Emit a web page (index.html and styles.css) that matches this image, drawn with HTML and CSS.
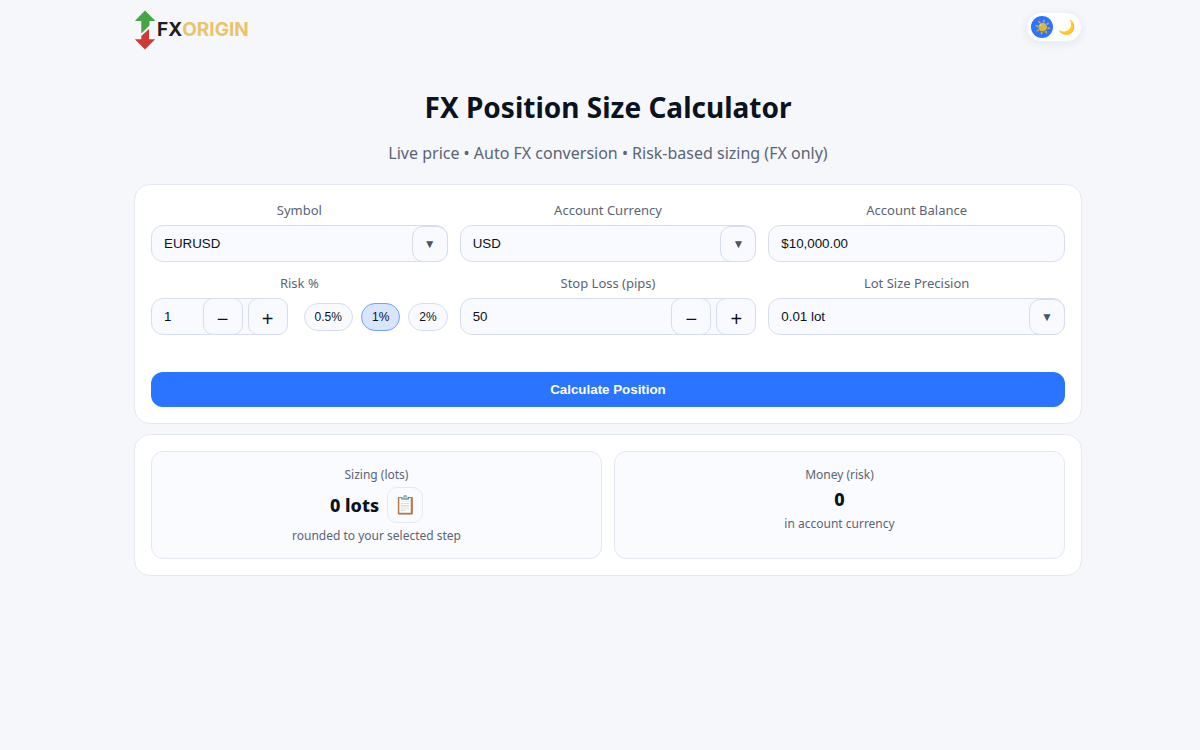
FILE: index.html
```html
<!DOCTYPE html>
<html lang="en">
<head>
<meta charset="utf-8">
<meta name="viewport" content="width=device-width, initial-scale=1">
<title>FX Position Size Calculator</title>
<link rel="stylesheet" href="styles.css">
</head>
<body>
<div class="page">
  <header class="topbar">
    <a class="brand" href="#" aria-label="FXORIGIN">
      <svg class="brand-mark" viewBox="0 0 22 40" aria-hidden="true">
        <path fill="#48a547" d="M11 0.500 21.500 11H15.500V15.500L7.300 23.500V11H0.800Z"/>
        <path fill="#cf3a34" d="M15 19V29.300H21.200L11 39.500 0.800 29.300H7.300V26Z"/>
      </svg>
      <span class="brand-fx">FX</span><span class="brand-origin">ORIGIN</span>
    </a>
    <div class="theme" role="group" aria-label="Theme">
      <button class="theme-btn theme-on" type="button" aria-label="Light"><span class="sun">☀️</span></button>
      <button class="theme-btn" type="button" aria-label="Dark">🌙</button>
    </div>
  </header>

  <main>
    <h1 class="title">FX Position Size Calculator</h1>
    <p class="subtitle">Live price • Auto FX conversion • Risk-based sizing (FX only)</p>

    <form class="card">
      <div class="fields">
        <div class="field">
          <label for="symbol">Symbol</label>
          <div class="control">
            <select class="box" id="symbol"><option>EURUSD</option></select>
            <span class="arrow" aria-hidden="true">▼</span>
          </div>
        </div>
        <div class="field">
          <label for="currency">Account Currency</label>
          <div class="control">
            <select class="box" id="currency"><option>USD</option></select>
            <span class="arrow" aria-hidden="true">▼</span>
          </div>
        </div>
        <div class="field">
          <label for="balance">Account Balance</label>
          <input class="box" id="balance" type="text" value="$10,000.00">
        </div>
        <div class="field">
          <label for="risk">Risk %</label>
          <div class="risk-row">
            <div class="control">
              <input class="box" id="risk" type="text" value="1">
              <div class="steps">
                <button class="step" type="button" aria-label="Decrease risk">−</button>
                <button class="step" type="button" aria-label="Increase risk">+</button>
              </div>
            </div>
            <div class="pills">
              <button class="pill" type="button">0.5%</button>
              <button class="pill pill-on" type="button">1%</button>
              <button class="pill" type="button">2%</button>
            </div>
          </div>
        </div>
        <div class="field">
          <label for="stop">Stop Loss (pips)</label>
          <div class="control">
            <input class="box" id="stop" type="text" value="50">
            <div class="steps">
              <button class="step" type="button" aria-label="Decrease stop loss">−</button>
              <button class="step" type="button" aria-label="Increase stop loss">+</button>
            </div>
          </div>
        </div>
        <div class="field">
          <label for="precision">Lot Size Precision</label>
          <div class="control">
            <select class="box" id="precision"><option>0.01 lot</option></select>
            <span class="arrow" aria-hidden="true">▼</span>
          </div>
        </div>
      </div>
      <button class="submit" type="button">Calculate Position</button>
    </form>

    <section class="card results">
      <div class="result">
        <div class="note">Sizing (lots)</div>
        <div class="value"><span>0 lots</span><button class="copy" type="button" aria-label="Copy">📋</button></div>
        <div class="note">rounded to your selected step</div>
      </div>
      <div class="result">
        <div class="note">Money (risk)</div>
        <div class="value">0</div>
        <div class="note">in account currency</div>
      </div>
    </section>
  </main>
</div>
</body>
</html>
```
FILE: styles.css
```css
* { box-sizing: border-box; }

body {
  margin: 0;
  padding: 10px 0 0 16px;
  background: #f5f7fb;
  color: #0b1220;
  font-family: "Noto Sans", sans-serif;
  text-align: center;
}

button, input, select { font-family: "Liberation Sans", Arial, sans-serif; color: #0b1220; }
button { cursor: pointer; padding: 0; }

.page { max-width: 948px; margin: 0 auto; }

.topbar { display: flex; justify-content: space-between; align-items: flex-start; }
.brand {
  display: flex;
  align-items: center;
  height: 40px;
  font: 700 19px/24px Inter, sans-serif;
  text-decoration: none;
}
.brand-mark { width: 22px; height: 40px; margin-right: 1px; }
.brand-fx { color: #1f1f1f; }
.brand-origin { color: #e8c46c; }

.theme {
  display: flex;
  gap: 2px;
  margin-top: 2px;
  padding: 3px 4px;
  border: 1px solid #eef1f8;
  border-radius: 999px;
  background: #fff;
  box-shadow: 0 2px 8px rgba(20, 40, 90, 0.08);
}
.theme-btn {
  width: 22px;
  height: 22px;
  border: 0;
  border-radius: 50%;
  background: none;
  font-size: 14px;
  line-height: 22px;
}
.theme-on { background: #2a74ff; }
.sun { opacity: 0.85; }

.title { margin: 38px 0 0; font-size: 28px; line-height: 38px; }
.subtitle { margin: 16px 0 20px; color: #5b6475; font-size: 16px; line-height: 22px; }

.card {
  margin-bottom: 10px;
  padding: 16px;
  border: 1px solid #e4e8f2;
  border-radius: 16px;
  background: #fff;
}
.fields { display: grid; grid-template-columns: repeat(3, minmax(0, 1fr)); gap: 12px; }
.field { display: flex; flex-direction: column; gap: 6px; }
.field label { color: #5b6475; font-size: 13px; line-height: 18px; }

.control { position: relative; flex: 1; min-width: 0; }
.box {
  display: block;
  width: 100%;
  height: 37px;
  padding: 0 12px;
  border: 1px solid #d6ddec;
  border-radius: 12px;
  background: #f8faff;
  appearance: none;
}
.arrow {
  position: absolute;
  inset: 1px 0 0 auto;
  width: 36px;
  border: 1px solid #d6ddec;
  border-radius: 11px;
  background: #f8faff;
  color: #4d5463;
  font: 12px/34px "Liberation Sans", "DejaVu Sans", sans-serif;
  pointer-events: none;
}
.steps { position: absolute; inset: 0 0 0 auto; display: flex; gap: 5px; }
.step {
  width: 40px;
  padding-top: 5px;
  border: 1px solid #d6ddec;
  border-radius: 10px;
  background: #f8faff;
  font-size: 20px;
}

.risk-row { display: flex; align-items: center; gap: 16px; }
.pills { display: flex; gap: 8px; }
.pill {
  height: 28px;
  padding: 0 10px;
  border: 1px solid #d6ddec;
  border-radius: 999px;
  background: #f8faff;
  font-size: 12px;
}
.pill-on { border-color: #6fa1ff; background: #d8e5ff; }

.submit {
  display: block;
  width: 100%;
  height: 35px;
  margin-top: 37px;
  border: 0;
  border-radius: 12px;
  background: #2a74ff;
  color: #fff;
  font-weight: 700;
}

.results { display: grid; grid-template-columns: repeat(2, minmax(0, 1fr)); gap: 12px; }
.result {
  padding: 14px;
  border: 1px solid #e4e8f2;
  border-radius: 12px;
  background: #fafbff;
}
.note { color: #5b6475; font-size: 12px; line-height: 17px; }
.value {
  display: flex;
  align-items: center;
  justify-content: center;
  gap: 8px;
  margin: 4px 0;
  font-size: 18px;
  line-height: 24px;
  font-weight: 800;
}
.copy {
  width: 36px;
  height: 36px;
  border: 1px solid #e4e8f2;
  border-radius: 10px;
  background: #fafbff;
  font-size: 18px;
}
```
